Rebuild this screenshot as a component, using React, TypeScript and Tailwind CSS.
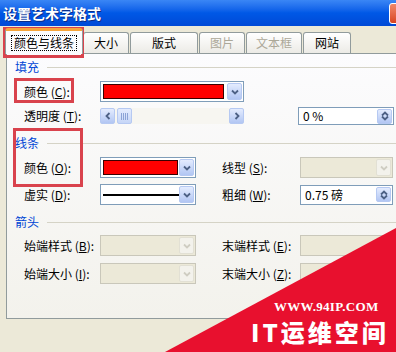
import React from "react";

const Chevron = ({ dir = "down", off = false }: { dir?: "down" | "left" | "right" | "up"; off?: boolean }) => {
  const d =
    dir === "down"
      ? "M2 3.5 L5 6.5 L8 3.5"
      : dir === "up"
      ? "M2 6.5 L5 3.5 L8 6.5"
      : dir === "left"
      ? "M6.5 2 L3.5 5 L6.5 8"
      : "M3.5 2 L6.5 5 L3.5 8";
  return (
    <svg width="10" height="10" viewBox="0 0 10 10">
      <path d={d} fill="none" stroke={off ? "#CFCDC2" : "#4D6185"} strokeWidth="1.8" />
    </svg>
  );
};

const DropBtn = ({ off = false }: { off?: boolean }) => (
  <div
    className={`ml-auto mr-px flex h-[17px] w-[15px] items-center justify-center rounded-[2px] border ${
      off ? "border-[#E2E0D4] bg-[#F3F2EC]" : "border-[#B6C9F2] bg-linear-to-b from-[#E4ECFE] to-[#B2C6F3]"
    }`}
  >
    <Chevron off={off} />
  </div>
);

const Label = ({ text, k, className = "" }: { text: string; k: string; className?: string }) => (
  <span className={`whitespace-nowrap text-[12px] leading-[14px] ${className}`}>
    {text} (<span className="underline">{k}</span>):
  </span>
);

const Heading = ({ text, className = "" }: { text: string; className?: string }) => (
  <div className={`flex h-[14px] items-center pl-[8px] ${className}`}>
    <span className="text-[12px] leading-[14px] text-[#0046D5]">{text}</span>
    <div className="ml-[8px] h-px flex-1 bg-[#D5D3C6]" />
  </div>
);

const Combo = ({ className = "", off = false, children }: { className?: string; off?: boolean; children?: React.ReactNode }) => (
  <div
    className={`flex h-[21px] items-center border ${off ? "border-[#C9C7BA] bg-[#ECE9D8]" : "border-[#7F9DB9] bg-white"} ${className}`}
  >
    {children}
    <DropBtn off={off} />
  </div>
);

const Spin = ({ value, className = "" }: { value: string; className?: string }) => (
  <div className={`flex items-center border border-[#7F9DB9] bg-white ${className}`}>
    <span className="pl-[4px] text-[12px] leading-[14px]">{value}</span>
    <div className="ml-auto mr-px flex h-[15px] w-[15px] flex-col items-center justify-center rounded-[2px] border border-[#B6C9F2] bg-linear-to-b from-[#E4ECFE] to-[#B2C6F3]">
      <div className="-mb-[3px]">
        <Chevron dir="up" />
      </div>
      <div className="-mt-[3px]">
        <Chevron dir="down" />
      </div>
    </div>
  </div>
);

const Tab = ({ text, off = false, className = "" }: { text: string; off?: boolean; className?: string }) => (
  <div
    className={`flex h-[21px] items-center justify-center rounded-t-[3px] border border-b-0 border-[#919B9C] bg-linear-to-b from-white to-[#ECEBE6] text-[12px] leading-[14px] ${
      off ? "text-[#ACA899]" : "text-black"
    } ${className}`}
  >
    {text}
  </div>
);

export default function App() {
  return (
    <div className="relative h-[352px] w-[396px] overflow-hidden bg-[#ECE9D8] font-['Noto_Sans_CJK_SC','Liberation_Sans',sans-serif] text-black">
      {/* title bar */}
      <div className="flex h-[26px] items-center justify-between overflow-hidden bg-linear-to-b from-[#3A86F5] via-[#0058E6] to-[#0049D6] pl-[3px]">
        <span className="text-[14px] font-bold leading-[16px] text-white [text-shadow:1px_1px_0_#0B2E8A]">设置艺术字格式</span>
        <div className="-mr-[14px] h-[21px] w-[21px] rounded-[3px] border border-white bg-linear-to-b from-[#F0876A] to-[#D9431E]" />
      </div>

      {/* tabs */}
      <div className="flex h-[27px] items-end pl-[5px]">
        <div className="relative z-10 -mb-px flex h-[26px] w-[78px] items-center justify-center rounded-t-[3px] border-x border-[#919B9C] border-t-[3px] border-t-[#F7A53A] bg-[#FCFCFE]">
          <span className="border border-dotted border-black px-[2px] text-[12px] leading-[14px]">颜色与线条</span>
        </div>
        <Tab text="大小" className="w-[46px]" />
        <Tab text="版式" className="ml-px w-[68px]" />
        <Tab text="图片" off className="ml-px w-[46px]" />
        <Tab text="文本框" off className="ml-px w-[56px]" />
        <Tab text="网站" className="ml-px w-[48px]" />
      </div>

      {/* panel */}
      <div className="ml-[6px] h-[266px] w-[400px] border border-[#919B9C] bg-linear-to-b from-[#FCFCFE] to-[#F3F2EC] pt-[6px]">
        <Heading text="填充" />
        <div className="mt-[7px] flex h-[21px] items-center pl-[17px]">
          <Label text="颜色" k="C" className="w-[76px]" />
          <Combo className="w-[144px]">
            <div className="ml-[2px] h-[15px] w-[121px] border border-[#3A0000] bg-[#FF0000]" />
          </Combo>
        </div>
        <div className="mt-[5px] flex h-[18px] items-center pl-[17px]">
          <Label text="透明度" k="T" className="w-[76px]" />
          <div className="flex h-[16px] w-[144px] items-center bg-[#F7F6F1]">
            <div className="flex h-[16px] w-[15px] items-center justify-center rounded-[2px] border border-[#B6C9F2] bg-linear-to-b from-[#E4ECFE] to-[#B2C6F3]">
              <Chevron dir="left" />
            </div>
            <div className="ml-[2px] flex h-[16px] w-[15px] items-center justify-center gap-px rounded-[2px] border border-[#B6C9F2] bg-linear-to-b from-[#E4ECFE] to-[#C6D6F7]">
              <div className="h-[7px] w-px bg-[#8CA3D6]" />
              <div className="h-[7px] w-px bg-[#8CA3D6]" />
              <div className="h-[7px] w-px bg-[#8CA3D6]" />
              <div className="h-[7px] w-px bg-[#8CA3D6]" />
            </div>
            <div className="ml-auto flex h-[16px] w-[15px] items-center justify-center rounded-[2px] border border-[#B6C9F2] bg-linear-to-b from-[#E4ECFE] to-[#B2C6F3]">
              <Chevron dir="right" />
            </div>
          </div>
          <Spin value="0 %" className="ml-[54px] h-[18px] w-[96px]" />
        </div>

        <Heading text="线条" className="mt-[11px]" />
        <div className="mt-[7px] flex h-[21px] items-center pl-[17px]">
          <Label text="颜色" k="O" className="w-[76px]" />
          <Combo className="w-[96px]">
            <div className="ml-[2px] h-[15px] w-[75px] border border-[#3A0000] bg-[#FF0000]" />
          </Combo>
          <Label text="线型" k="S" className="ml-[26px] w-[78px]" />
          <Combo off className="w-[93px]" />
        </div>
        <div className="mt-[6px] flex h-[21px] items-center pl-[17px]">
          <Label text="虚实" k="D" className="w-[76px]" />
          <Combo className="w-[96px]">
            <div className="ml-[2px] h-[2px] w-[76px] bg-black" />
          </Combo>
          <Label text="粗细" k="W" className="ml-[26px] w-[78px]" />
          <Spin value="0.75 磅" className="h-[20px] w-[93px]" />
        </div>

        <Heading text="箭头" className="mt-[10px]" />
        <div className="mt-[6px] flex h-[21px] items-center pl-[17px]">
          <Label text="始端样式" k="B" className="w-[76px]" />
          <Combo off className="w-[96px]" />
          <Label text="末端样式" k="E" className="ml-[26px] w-[78px]" />
          <Combo off className="w-[93px]" />
        </div>
        <div className="mt-[7px] flex h-[21px] items-center pl-[17px]">
          <Label text="始端大小" k="I" className="w-[76px]" />
          <Combo off className="w-[96px]" />
          <Label text="末端大小" k="Z" className="ml-[26px] w-[78px]" />
          <Combo off className="w-[93px]" />
        </div>
      </div>

      {/* red annotation boxes */}
      <div className="absolute left-[3px] top-[27px] h-[31px] w-[81px] border-[3px] border-[#D9434D]" />
      <div className="absolute left-[14px] top-[78px] h-[25px] w-[60px] border-[3px] border-[#D9434D]" />
      <div className="absolute left-[13px] top-[128px] h-[59px] w-[70px] border-[3px] border-[#D9434D]" />

      {/* watermark */}
      <svg className="absolute left-0 top-0" width="396" height="352" viewBox="0 0 396 352">
        <polygon points="165,352 396,228 396,352" fill="#E8102E" />
      </svg>
      <div className="absolute left-[274px] top-[299px] whitespace-nowrap font-['Liberation_Serif',serif] text-[13px] font-bold leading-[16px] tracking-[0.3px] text-white">
        WWW.94IP.COM
      </div>
      <div className="absolute left-[251px] top-[317px] whitespace-nowrap text-[24px] font-black leading-[30px] tracking-[3px] text-white">
        IT运维空间
      </div>
    </div>
  );
}
